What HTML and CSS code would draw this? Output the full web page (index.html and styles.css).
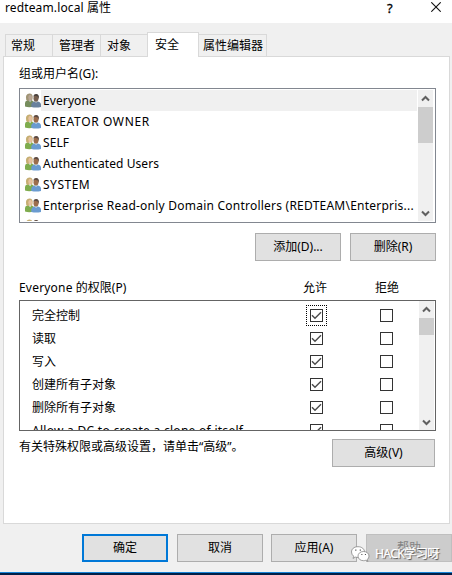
FILE: index.html
```html
<!DOCTYPE html>
<html lang="zh-CN">
<head>
<meta charset="utf-8">
<title>redteam.local 属性</title>
<link rel="stylesheet" href="styles.css">
</head>
<body>
<svg class="defs" aria-hidden="true">
  <symbol id="users" viewBox="0 0 16 15">
    <path class="woman-body" d="M0 13.5V10Q0 7.8 2.5 7.4H7L9 9V13.5Q4 14.8 0 13.5Z"/>
    <path class="hair" d="M1.2 6.5Q0 1 4.4.5Q8.2.6 7.6 5L7 8H2Z"/>
    <ellipse class="face" cx="5.2" cy="4.4" rx="1.9" ry="2.7"/>
    <path class="collar" d="M3.6 7.4L5.2 9.3 6.4 7.2Z"/>
    <path class="man-body" d="M6.3 14V11.5Q6.5 9.2 9 8.4H13Q16 9 16 12V14Q11 15.2 6.3 14Z"/>
    <path class="collar" d="M9.6 8.3L11 10 12.6 8.3Z"/>
    <ellipse class="man-face" cx="11" cy="5.2" rx="2.5" ry="3.4"/>
    <path class="man-hair" d="M8.4 3.8Q8.4 1 11.2.9Q14.4 1 14 6L12.8 3.4 9.8 2.8Z"/>
  </symbol>
  <symbol id="up" viewBox="0 0 9 7"><path class="chev" d="M1 5.5L4.5 2 8 5.5"/></symbol>
  <symbol id="down" viewBox="0 0 9 7"><path class="chev" d="M1 1.5L4.5 5 8 1.5"/></symbol>
  <symbol id="tick" viewBox="0 0 11 11"><path class="tick" d="M1 5.2L4 8.2 10 2.3"/></symbol>
</svg>
<div class="window">
  <header class="titlebar">
    <span class="title"><span class="name">redteam.local</span> 属性</span>
    <span class="help">?</span>
    <svg class="close" viewBox="0 0 10 10"><path d="M.3.3L9.7 9.7M9.7.3L.3 9.7"/></svg>
  </header>
  <nav class="tabs">
    <span class="tab t1">常规</span><span class="tab t2">管理者</span><span class="tab t3">对象</span><span class="tab active">安全</span><span class="tab t5">属性编辑器</span>
  </nav>
  <main class="panel">
    <div class="label">组或用户名(G):</div>
    <div class="box users">
      <ul class="names">
        <li class="selected"><svg><use href="#users"/></svg><span>Everyone</span></li>
        <li><svg><use href="#users"/></svg><span class="caps">CREATOR OWNER</span></li>
        <li><svg><use href="#users"/></svg><span>SELF</span></li>
        <li><svg><use href="#users"/></svg><span class="tight">Authenticated Users</span></li>
        <li><svg><use href="#users"/></svg><span class="system">SYSTEM</span></li>
        <li><svg><use href="#users"/></svg><span class="long">Enterprise Read-only Domain Controllers (REDTEAM\Enterpris...</span></li>
        <li><svg><use href="#users"/></svg><span></span></li>
      </ul>
      <div class="scroll"><svg><use href="#up"/></svg><i></i><svg class="end"><use href="#down"/></svg></div>
    </div>
    <div class="edit"><button>添加(D)...</button><button>删除(R)</button></div>
    <div class="heads"><span><span class="lat">Everyone</span> 的权限(P)</span><span>允许</span><span>拒绝</span></div>
    <div class="box perms">
      <ul class="rights">
        <li><span>完全控制</span><b class="focus"><svg><use href="#tick"/></svg></b><b></b></li>
        <li><span>读取</span><b><svg><use href="#tick"/></svg></b><b></b></li>
        <li><span>写入</span><b><svg><use href="#tick"/></svg></b><b></b></li>
        <li><span>创建所有子对象</span><b><svg><use href="#tick"/></svg></b><b></b></li>
        <li><span>删除所有子对象</span><b><svg><use href="#tick"/></svg></b><b></b></li>
        <li><span class="clone">Allow a DC to create a clone of itself</span><b><svg><use href="#tick"/></svg></b><b></b></li>
      </ul>
      <div class="scroll"><svg><use href="#up"/></svg><i></i><svg class="end"><use href="#down"/></svg></div>
    </div>
    <div class="advanced"><span>有关特殊权限或高级设置，请单击“高级”。</span><button>高级(V)</button></div>
  </main>
  <footer class="actions"><button class="ok">确定</button><button>取消</button><button>应用(A)</button><button class="disabled">帮助</button></footer>
  <div class="edge"></div>
  <div class="watermark">
    <svg viewBox="0 0 19 16">
      <path class="bubble" d="M7 .7C3 .7.5 3 .5 6Q.5 8.6 2.7 10.2L2 12.4 4.5 11.1Q5.8 11.5 7.3 11.4C11 11.2 13.5 9 13.5 6S10.9.7 7 .7Z"/>
      <path class="bubble" d="M12.5 5.5C9.3 5.5 7 7.5 7 10.1S9.4 14.7 12.5 14.7Q13.7 14.7 14.8 14.3L16.9 15.4 16.3 13.5Q18 12.1 18 10.1C18 7.5 15.7 5.5 12.5 5.5Z"/>
      <path class="eyes" d="M4.2 4.2h1.2M8.7 4.2h1.2M10.3 8.5h1.1M13.9 8.5h1.1"/>
    </svg>
    <span>HACK学习呀</span>
  </div>
</div>
</body>
</html>
```
FILE: styles.css
```css
* { box-sizing: border-box; }
body { margin: 0; font: 12px/16px "Noto Sans", "Noto Sans CJK SC", sans-serif; color: #000; }
ul { margin: 0; padding: 0; list-style: none; }
.defs { position: absolute; width: 0; height: 0; }
.window { position: relative; width: 452px; height: 575px; background: #f0f0f0; overflow: hidden; display: flex; flex-direction: column; }
.titlebar { height: 23px; flex: none; background: #fff; display: flex; align-items: flex-start; padding-left: 5px; }
.title { width: 382px; }
.name { letter-spacing: .13px; }
.lat { letter-spacing: .2px; }
.help { width: 44px; font-size: 13px; -webkit-text-stroke: .3px #000; }
.close { width: 10px; height: 10px; margin-top: 2px; }
.close path { stroke: #111; stroke-width: 1.1; fill: none; }
.tabs { height: 25px; flex: none; margin: 9px 0 -1px 5px; display: flex; align-items: flex-end; position: relative; z-index: 1; }
.tab { height: 22px; margin-bottom: 1px; border: 1px solid #d9d9d9; border-bottom: 0; padding: 3px 0 0 5px; width: 48px; white-space: nowrap; }
.t2, .t3 { border-left: 0; padding-left: 6px; }
.t3 { width: 47px; }
.tab.active { width: 52px; height: 25px; margin: 0 0 0 -1px; padding: 4px 0 0 7px; background: #fff; }
.t5 { width: 68px; border-left: 0; padding-left: 4px; }
.panel { height: 468px; flex: none; margin: 0 2px 0 3px; border: 1px solid #d9d9d9; background: #fff; padding: 9px 13px 0 15px; }
.label { height: 22px; }
.box { width: 417px; display: flex; border: 1px solid #828790; overflow: hidden; }
.users { height: 135px; padding: 1px 1px 1px 5px; }
.names { width: 392px; overflow: hidden; }
.names li { height: 21px; display: flex; }
.names svg { width: 16px; height: 15px; margin-top: 3px; flex: none; }
.names span { flex: 1; padding: 3px 0 0 2px; white-space: nowrap; letter-spacing: .1px; }
.names .caps { letter-spacing: .63px; }
.names .tight { letter-spacing: .08px; }
.names .system { letter-spacing: .5px; }
.names .long { letter-spacing: .23px; }
.selected span { background: #f0f0f0; }
.woman-body { fill: #7fac4e; }
.hair { fill: #c6ae72; }
.face { fill: #e6c19f; }
.man-body { fill: #6a9bd0; }
.man-face { fill: #9c6d4c; }
.man-hair { fill: #5c4a40; }
.collar { fill: #dfe9ee; }
.selected .woman-body { fill: #5f9260; }
.selected svg { filter: saturate(.6) brightness(.85); }
.scroll { width: 15px; margin-left: auto; background: #f0f0f0; display: flex; flex-direction: column; align-items: center; }
.users .scroll { margin-right: 1px; }
.scroll svg { width: 9px; height: 7px; margin: 5px 0; flex: none; }
.scroll i { width: 15px; height: 36px; background: #cdcdcd; }
.scroll .end { margin: auto 0 4px; }
.chev { fill: none; stroke: #606060; stroke-width: 2; }
.edit { margin-top: 10px; display: flex; justify-content: flex-end; gap: 9px; }
button { width: 86px; height: 28px; border: 1px solid #adadad; background: #e1e1e1; padding: 0 0 1px; font: inherit; color: #000; }
.heads { height: 39px; padding-top: 19px; display: grid; grid-template-columns: 284px 72px 1fr; }
.perms { height: 131px; border-color: #646464; padding: 0 1px 0 12px; }
.rights { width: 370px; overflow: hidden; padding-top: 3px; }
.rights li { height: 23px; display: grid; grid-template-columns: 278px 70px 13px; align-items: center; white-space: nowrap; }
.rights b { width: 13px; height: 13px; border: 1px solid #333; display: flex; }
.rights b svg { width: 11px; height: 11px; }
.rights .focus { outline: 1px dotted #000; outline-offset: 3px; }
.clone { letter-spacing: .28px; }
.tick { fill: none; stroke: #4a4a4a; stroke-width: 1.4; }
.perms .scroll i { height: 17px; }
.advanced { height: 36px; padding: 8px 1px 0 0; display: flex; justify-content: space-between; }
.advanced button { width: 103px; flex: none; }
.advanced span { white-space: nowrap; }
.actions { margin: 10px 0 0 82px; flex: none; display: flex; gap: 9px; }
.actions button:nth-child(3) { margin-left: -1px; }
.ok { border: 2px solid #0078d7; }
.disabled { background: #ccc; border-color: #bfbfbf; color: #838383; flex: none; }
.edge { height: 3px; margin-top: auto; border-top: 1px solid #1883d7; background: #001f47; }
.watermark { position: absolute; left: 351px; top: 546px; display: flex; align-items: center; color: #fff; text-shadow: 1px 1px 1px #444; }
.watermark svg { width: 19px; height: 16px; margin-right: 5px; }
.watermark span { white-space: nowrap; letter-spacing: -.75px; font-size: 12.3px; -webkit-text-stroke: .25px #fff; }
.bubble { fill: #fff; stroke: #777; stroke-width: .7; }
.eyes { stroke: #555; stroke-width: 1.2; }
```
